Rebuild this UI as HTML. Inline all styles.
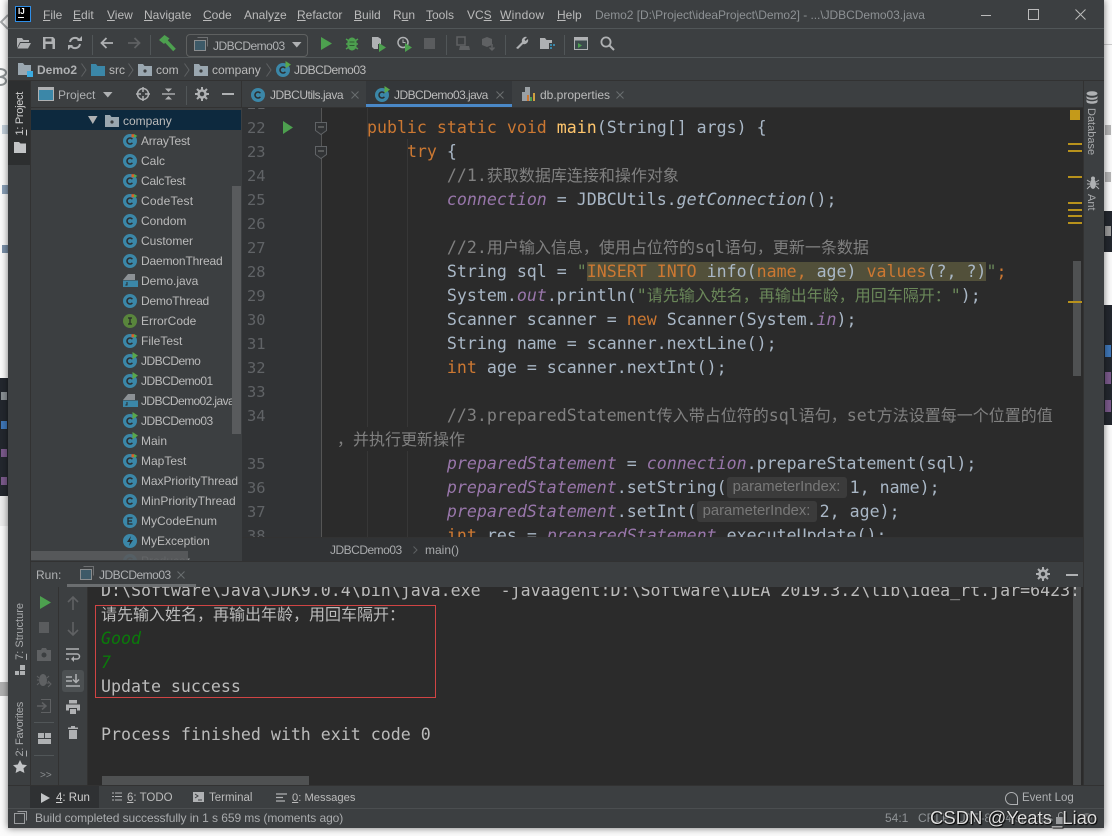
<!DOCTYPE html>
<html><head><meta charset="utf-8"><style>
html,body{margin:0;padding:0;width:1112px;height:836px;overflow:hidden;background:#fbfbfb}
*{box-sizing:border-box}
div,span.a,svg.a{position:absolute}
body{font-family:"Liberation Sans","Noto Sans CJK SC",sans-serif;font-size:12px;color:#bbbbbb}
#w{left:8px;top:0;width:1096px;height:828px;background:#3c3f41;box-shadow:0 0 7px rgba(0,0,0,.55)}
.t{position:absolute;white-space:pre;line-height:16px;height:16px}
.t u{text-decoration:underline}
.q{letter-spacing:-.5px}
.v{position:absolute;white-space:pre;writing-mode:vertical-rl;line-height:14px;font-size:11px}
.r{transform:rotate(180deg)}
.hl{position:absolute;height:1px;background:#515658}
.vl{position:absolute;width:1px;background:#515658}
svg{position:absolute;overflow:visible}
.l{position:absolute;left:327px;white-space:pre;height:24px;line-height:24px;font-family:"DejaVu Sans Mono","Noto Sans CJK SC",monospace;font-size:16.6px;color:#a9b7c6;transform:translateY(1px)}
.n{position:absolute;left:247px;white-space:pre;height:24px;line-height:24px;font-family:"DejaVu Sans Mono",monospace;font-size:15.4px;color:#606366;transform:translateY(1px)}
.k{color:#cc7832}.s{color:#6a8759}.c{color:#808080}.f{color:#9876aa;font-style:italic}.i{font-style:italic}.m{color:#ffc66d}
.z{font-size:16px;font-family:"Noto Sans CJK SC",sans-serif;line-height:0}
.h{background:#52503a}
.p{display:inline-block;position:relative;width:123px;height:0}
.p>span{position:absolute;left:0;top:-16px;width:120px;height:21px;background:#3b3b3b;color:#787878;font:14.8px/21px "Liberation Sans",sans-serif;border-radius:3px;padding-left:6px;overflow:hidden}
.tr{position:absolute;left:141px;height:20px;line-height:20px;white-space:pre;color:#bbbbbb;font-size:12px}
.o{position:absolute;left:101px;white-space:pre;height:24px;line-height:24px;font-family:"DejaVu Sans Mono","Noto Sans CJK SC",monospace;font-size:16.6px;color:#bbbbbb;transform:translateY(1px)}
</style></head><body>
<svg width="0" height="0" style="position:absolute">
<defs>
<g id="c"><circle cx="7" cy="7" r="7" fill="#3b87a8"/><path d="M9.4 5.2A3 3 0 1 0 9.4 8.8" fill="none" stroke="#2b2d2e" stroke-width="1.5"/></g>
<g id="ct"><use href="#c"/><path d="M8.5 0.2h3v3h-3z" fill="#d9622b"/><path d="M11 0l3.4 2-3.4 2z" fill="#59a84b"/></g>
<g id="cr"><use href="#c"/><path d="M9.5 -2l5.5 3.6-5.5 3.6z" fill="#59a84b"/></g>
<g id="j"><path d="M5 1h7v6H0v0L5 1z" fill="#9aa0a4" opacity=".85"/><path d="M0 7.5h15V14H0z" fill="#3b87a8"/><path d="M4 9v3H2.4" stroke="#26292a" fill="none"/></g>
<g id="fd"><path d="M0 1h5l1.500 2H14v10H0z" fill="#9aa7b0"/><circle cx="7" cy="8" r="1.6" fill="#3c3f41"/></g>
<g id="fb"><path d="M0 1h5l1.500 2H14v10H0z" fill="#3b87a8"/></g>
</defs></svg>

<!-- outer page fragments -->
<div style="left:0;top:378px;width:8px;height:118px;background:#23272e"></div>
<div style="left:0;top:496px;width:8px;height:30px;background:#ececec"></div>
<div style="left:1px;top:421px;width:6px;height:8px;background:#3f76b8"></div>
<div style="left:1px;top:449px;width:6px;height:8px;background:#7b5a8c"></div>
<div style="left:1px;top:477px;width:6px;height:8px;background:#7b5a8c"></div>
<div style="left:1px;top:392px;width:6px;height:8px;background:#8a8f94"></div>
<div style="left:2px;top:125px;width:6px;height:9px;background:#c3d0dc"></div>
<div style="left:2px;top:185px;width:6px;height:9px;background:#8aa0b8"></div>
<div style="left:2px;top:245px;width:6px;height:8px;background:#7a90a8"></div>
<svg style="left:0;top:68px" width="8" height="18"><path d="M0 1c8 0 8 7 0 8 8 0 8 8 0 8" fill="none" stroke="#8f9496" stroke-width="2"/></svg>
<svg style="left:0;top:14px" width="8" height="16"><path d="M8 1L1 8l7 7" fill="none" stroke="#a5a8aa" stroke-width="2"/></svg>
<div style="left:0;top:682px;width:8px;height:14px;background:#b0b0b0"></div>
<div style="left:1104px;top:211px;width:8px;height:41px;background:#23272e"></div>
<div style="left:1104px;top:305px;width:8px;height:120px;background:#23272e"></div>
<div style="left:1105px;top:345px;width:6px;height:12px;background:#3f76b8"></div>
<div style="left:1105px;top:372px;width:6px;height:12px;background:#7b5a8c"></div>
<div style="left:1105px;top:400px;width:6px;height:12px;background:#7b5a8c"></div>
<div style="left:1105px;top:125px;width:6px;height:10px;background:#b5b5b5"></div>
<div style="left:1105px;top:172px;width:6px;height:10px;background:#b5b5b5"></div>
<div style="left:1105px;top:226px;width:6px;height:10px;background:#9a9a9a"></div>
<div style="left:1104px;top:44px;width:8px;height:1px;background:#cccccc"></div>

<div id="w"></div>
<div style="left:0;top:0;width:1112px;height:836px">

<!-- rows -->
<div class="hl" style="left:8px;top:28px;width:1096px"></div>
<div class="hl" style="left:8px;top:57px;width:1096px"></div>
<div class="hl" style="left:8px;top:80px;width:1096px;background:#323232"></div>

<!-- title bar -->
<div style="left:15px;top:6px;width:16px;height:16px;background:#000;border:1px solid #2f8fe8"></div>
<div style="left:18px;top:7px;font:bold 8px/9px 'Liberation Sans',sans-serif;color:#fff">IJ</div>
<div style="left:18px;top:17px;width:6px;height:1px;background:#fff"></div>
<div class="t" style="left:43px;top:7px"><u>F</u>ile</div>
<div class="t" style="left:73px;top:7px"><u>E</u>dit</div>
<div class="t" style="left:107px;top:7px"><u>V</u>iew</div>
<div class="t" style="left:144px;top:7px"><u>N</u>avigate</div>
<div class="t" style="left:203px;top:7px"><u>C</u>ode</div>
<div class="t" style="left:244px;top:7px">Analy<u>z</u>e</div>
<div class="t" style="left:297px;top:7px"><u>R</u>efactor</div>
<div class="t" style="left:354px;top:7px"><u>B</u>uild</div>
<div class="t" style="left:393px;top:7px">R<u>u</u>n</div>
<div class="t" style="left:426px;top:7px"><u>T</u>ools</div>
<div class="t" style="left:467px;top:7px">VC<u>S</u></div>
<div class="t" style="left:500px;top:7px;letter-spacing:.3px"><u>W</u>indow</div>
<div class="t" style="left:557px;top:7px"><u>H</u>elp</div>
<div class="t" style="left:595px;top:7px;color:#8d9194;letter-spacing:-.05px">Demo2 [D:\Project\ideaProject\Demo2] - ...\JDBCDemo03.java</div>
<div style="left:981px;top:15px;width:10px;height:1px;background:#bbb"></div>
<div style="left:1028px;top:9px;width:11px;height:11px;border:1px solid #bbb"></div>
<svg style="left:1075px;top:9px" width="11" height="11"><path d="M0.500 0.500l10 10M10.500 0.500l-10 10" stroke="#bbb"/></svg>

<!-- toolbar -->
<svg style="left:16px;top:36px" width="16" height="14"><path d="M1 2h5l1.500 2H13v2H4L1 12z" fill="#afb1b3"/><path d="M4.500 7H15l-3 5.500H1.500z" fill="#afb1b3"/></svg>
<svg style="left:42px;top:36px" width="14" height="14"><path d="M1 1h10l2 2v10H1z" fill="#afb1b3"/><path d="M3.500 2.500h6v3h-6z" fill="#3c3f41"/><path d="M3.500 8h7v5h-7z" fill="#3c3f41"/></svg>
<svg style="left:68px;top:36px" width="14" height="14"><path d="M2 6a5 5 0 0 1 9-2M12 8a5 5 0 0 1-9 2" fill="none" stroke="#afb1b3" stroke-width="2"/><path d="M9 5h5V0zM5 9H0v5z" fill="#afb1b3"/></svg>
<div class="vl" style="left:92px;top:35px;height:20px"></div>
<svg style="left:100px;top:37px" width="14" height="12"><path d="M13 6H2M6.500 1L1.500 6l5 5" fill="none" stroke="#afb1b3" stroke-width="1.800"/></svg>
<svg style="left:127px;top:37px" width="14" height="12"><path d="M1 6h11M7.500 1l5 5-5 5" fill="none" stroke="#5f6163" stroke-width="1.800"/></svg>
<div class="vl" style="left:150px;top:35px;height:20px"></div>
<svg style="left:159px;top:35px" width="17" height="17"><path d="M0 5L5.500 0l5 3.500L5 9z" fill="#4da04f"/><path d="M6.500 5.500L15.500 15" stroke="#4da04f" stroke-width="3.600"/></svg>
<div style="left:186px;top:34px;width:122px;height:23px;border:1px solid #5e6060;border-radius:4px"></div>
<svg style="left:194px;top:37px" width="14" height="14"><path d="M3.500 0.500h10v9" fill="none" stroke="#6e7072"/><rect x="0.500" y="3.500" width="11" height="10" fill="#3d5a68" stroke="#8a8d8f"/></svg>
<div class="t q" style="left:213px;top:38px;color:#afb1b3">JDBCDemo03</div>
<svg style="left:292px;top:42px" width="10" height="6"><path d="M0 0h9.500L4.800 5.500z" fill="#afb1b3"/></svg>
<svg style="left:321px;top:37px" width="11" height="13"><path d="M0 0l11 6.500L0 13z" fill="#4da04f"/></svg>
<svg style="left:345px;top:36px" width="14" height="15"><path d="M1 3l3 2M13 3l-3 2M1 8h3M13 8h-3M1 13l3-2M13 13l-3-2" stroke="#4da04f" stroke-width="1.400"/><ellipse cx="7" cy="8" rx="4.800" ry="6.500" fill="#4da04f"/><path d="M4.500 6h5M4.500 9.500h5" stroke="#2f5a30"/></svg>
<svg style="left:371px;top:36px" width="16" height="16"><path d="M1 1h6l3 2v5H7v5H3L1 11z" fill="#afb1b3"/><path d="M8 7l7 4.500L8 16z" fill="#4da04f"/></svg>
<svg style="left:397px;top:36px" width="16" height="16"><circle cx="6" cy="6.500" r="5" fill="none" stroke="#afb1b3" stroke-width="1.500"/><path d="M6 3.500v3h2.500" stroke="#afb1b3" fill="none"/><path d="M8 7l7 4.500L8 16z" fill="#4da04f"/></svg>
<div style="left:424px;top:38px;width:11px;height:11px;background:#5a5c5e"></div>
<div class="vl" style="left:446px;top:35px;height:20px"></div>
<svg style="left:456px;top:36px" width="14" height="15"><path d="M1 1h8v8H1z" fill="none" stroke="#5f6163" stroke-width="1.500"/><path d="M4 10h9l1 4H3z" fill="#5f6163"/></svg>
<svg style="left:481px;top:36px" width="15" height="15"><path d="M1 3l5-2 5 2v6l-5 2-5-2z" fill="#5f6163"/><path d="M11 8v6M8.500 11.500l2.500 2.500 2.500-2.500" stroke="#5f6163" fill="none" stroke-width="1.500"/></svg>
<div class="vl" style="left:505px;top:35px;height:20px"></div>
<svg style="left:515px;top:36px" width="14" height="14"><path d="M1 12L7 6a4 4 0 0 1 5-5L9.500 3.500l1 1.500L13 3a4 4 0 0 1-5 5l-5 5z" fill="#afb1b3"/></svg>
<svg style="left:540px;top:37px" width="15" height="13"><path d="M0 1h5l1.500 2H12v9H0z" fill="#afb1b3"/><path d="M9 6h6v7H9z" fill="#3c3f41"/><path d="M10 7h2v2h-2zM13 7h2v2h-2zM10 10h2v2h-2z" fill="#3b87a8"/></svg>
<div class="vl" style="left:564px;top:35px;height:20px"></div>
<svg style="left:574px;top:37px" width="14" height="13"><rect x="0.500" y="0.500" width="13" height="12" fill="#3d4a4d" stroke="#afb1b3"/><path d="M1 1h12v2.500H1z" fill="#afb1b3"/><path d="M4 6l4 2.500L4 11z" fill="#4da04f"/></svg>
<svg style="left:600px;top:36px" width="15" height="15"><circle cx="6" cy="6" r="4.600" fill="none" stroke="#afb1b3" stroke-width="1.800"/><path d="M9.500 9.500l4.500 4.500" stroke="#afb1b3" stroke-width="2"/></svg>

<!-- nav bar -->
<svg style="left:18px;top:62px" width="16" height="16"><path d="M0 1h5l1.500 2H13v10H0z" fill="#9aa7b0"/><rect x="9" y="9" width="6" height="6" fill="#3bace2"/></svg>
<div class="t" style="left:37px;top:62px;font-weight:bold;color:#afb1b3">Demo2</div>
<svg style="left:81px;top:63px" width="6" height="14"><path d="M0.500 0.500L5 7l-4.500 6.500" fill="none" stroke="#5e6163"/></svg>
<svg style="left:91px;top:63px" width="14" height="14"><use href="#fb"/></svg>
<div class="t" style="left:109px;top:62px">src</div>
<svg style="left:128px;top:63px" width="6" height="14"><path d="M0.500 0.500L5 7l-4.500 6.500" fill="none" stroke="#5e6163"/></svg>
<svg style="left:138px;top:63px" width="14" height="14"><use href="#fd"/></svg>
<div class="t" style="left:156px;top:62px">com</div>
<svg style="left:184px;top:63px" width="6" height="14"><path d="M0.500 0.500L5 7l-4.500 6.500" fill="none" stroke="#5e6163"/></svg>
<svg style="left:194px;top:63px" width="14" height="14"><use href="#fd"/></svg>
<div class="t" style="left:212px;top:62px">company</div>
<svg style="left:266px;top:63px" width="6" height="14"><path d="M0.500 0.500L5 7l-4.500 6.500" fill="none" stroke="#5e6163"/></svg>
<svg style="left:276px;top:63px" width="14" height="14"><use href="#cr"/></svg>
<div class="t q" style="left:294px;top:62px">JDBCDemo03</div>

<!-- left strip -->
<div style="left:8px;top:81px;width:22px;height:84px;background:#2d2f30"></div>
<div class="vl" style="left:30px;top:81px;height:704px;background:#323232"></div>
<div class="v r" style="left:13px;top:92px;color:#d0d0d0;letter-spacing:-.3px"><u>1</u>: Project</div>
<svg style="left:14px;top:142px" width="12" height="11"><path d="M0 0h5l1.500 1.500H12V11H0z" fill="#c2c4c6"/></svg>
<div class="v r" style="left:13px;top:603px;color:#a9abad"><u>7</u>: Structure</div>
<svg style="left:14px;top:664px" width="12" height="12"><path d="M6 1h5v5H6zM1 7h4v4H1zM6 7h5v4H6z" fill="#afb1b3"/></svg>
<div class="v r" style="left:13px;top:702px;color:#a9abad;letter-spacing:-.25px"><u>2</u>: Favorites</div>
<svg style="left:13px;top:760px" width="14" height="13"><path d="M7 0l2.200 4.500 4.800.6-3.500 3.300.9 4.600L7 10.700 2.600 13l.9-4.600L0 5.100l4.800-.6z" fill="#c2c4c6"/></svg>

<!-- project header -->
<svg style="left:38px;top:87px" width="16" height="14"><rect x="0.500" y="0.500" width="15" height="13" fill="#3b87a8" stroke="#afb1b3"/><path d="M1 1h14v2H1z" fill="#afb1b3"/></svg>
<div class="t" style="left:58px;top:87px;color:#afb1b3">Project</div>
<svg style="left:103px;top:92px" width="10" height="6"><path d="M0 0h9.500L4.800 5.500z" fill="#afb1b3"/></svg>
<svg style="left:136px;top:87px" width="14" height="14"><circle cx="7" cy="7" r="5.500" fill="none" stroke="#afb1b3" stroke-width="1.500"/><path d="M7 0v5M7 9v5M0 7h5M9 7h5" stroke="#afb1b3" stroke-width="1.500"/></svg>
<svg style="left:162px;top:87px" width="13" height="14"><path d="M0 7h13" stroke="#afb1b3" stroke-width="1.400"/><path d="M6.500 5L3 1.500h7zM6.500 9L3 12.500h7z" fill="#afb1b3"/></svg>
<div class="vl" style="left:186px;top:86px;height:19px"></div>
<svg style="left:195px;top:87px" width="14" height="14"><circle cx="7" cy="7" r="3.500" fill="none" stroke="#afb1b3" stroke-width="2.500"/><path d="M7 0v3M7 11v3M0 7h3M11 7h3M2 2l2 2M10 10l2 2M12 2l-2 2M2 12l2-2" stroke="#afb1b3" stroke-width="2"/></svg>
<div style="left:222px;top:93px;width:12px;height:2px;background:#afb1b3"></div>
<div class="hl" style="left:30px;top:107px;width:1053px;background:#323232"></div>

<!-- tabs -->
<div class="vl" style="left:241px;top:81px;height:26px;background:#323232"></div>
<svg style="left:251px;top:88px" width="14" height="14"><use href="#c"/></svg>
<div class="t q" style="left:270px;top:87px">JDBCUtils.java</div>
<svg style="left:351px;top:91px" width="8" height="8"><path d="M0.500 0.500l7 7M7.500 0.500l-7 7" stroke="#6a6d6f"/></svg>
<div style="left:366px;top:81px;width:146px;height:26px;background:#34373a"></div>
<div style="left:366px;top:104px;width:146px;height:3px;background:#4a88c7"></div>
<svg style="left:375px;top:88px" width="14" height="14"><use href="#cr"/></svg>
<div class="t" style="left:394px;top:87px;letter-spacing:-.55px">JDBCDemo03.java</div>
<svg style="left:496px;top:91px" width="8" height="8"><path d="M0.500 0.500l7 7M7.500 0.500l-7 7" stroke="#6a6d6f"/></svg>
<svg style="left:522px;top:87px" width="14" height="15"><path d="M3 0h5v14H0V5h3z" fill="#9aa0a4"/><path d="M5 8h2v6H5z" fill="#cc7832"/><path d="M8 10h2v4H8z" fill="#4da04f"/><path d="M11 6h2v8h-2z" fill="#d0a040"/></svg>
<div class="t" style="left:540px;top:87px">db.properties</div>
<svg style="left:616px;top:91px" width="8" height="8"><path d="M0.500 0.500l7 7M7.500 0.500l-7 7" stroke="#6a6d6f"/></svg>

<!-- project tree -->
<div style="left:31px;top:110px;width:210px;height:20px;background:#0d293e"></div>
<svg style="left:88px;top:116px" width="10" height="8"><path d="M0 0h9.500L4.800 8z" fill="#afb1b3"/></svg>
<svg style="left:105px;top:114px" width="14" height="14"><use href="#fd"/></svg>
<div class="tr" style="left:123px;top:111px">company</div>
<svg style="left:123px;top:134px" width="14" height="14"><use href="#ct"/></svg><div class="tr" style="top:131px;letter-spacing:-.2px">ArrayTest</div>
<svg style="left:123px;top:154px" width="14" height="14"><use href="#c"/></svg><div class="tr" style="top:151px">Calc</div>
<svg style="left:123px;top:174px" width="14" height="14"><use href="#ct"/></svg><div class="tr" style="top:171px;letter-spacing:-.2px">CalcTest</div>
<svg style="left:123px;top:194px" width="14" height="14"><use href="#ct"/></svg><div class="tr" style="top:191px;letter-spacing:.2px">CodeTest</div>
<svg style="left:123px;top:214px" width="14" height="14"><use href="#c"/></svg><div class="tr" style="top:211px">Condom</div>
<svg style="left:123px;top:234px" width="14" height="14"><use href="#c"/></svg><div class="tr" style="top:231px">Customer</div>
<svg style="left:123px;top:254px" width="14" height="14"><use href="#c"/></svg><div class="tr" style="top:251px;letter-spacing:-.15px">DaemonThread</div>
<svg style="left:123px;top:273px" width="15" height="15"><use href="#j"/></svg><div class="tr" style="top:271px">Demo.java</div>
<svg style="left:123px;top:294px" width="14" height="14"><use href="#c"/></svg><div class="tr" style="top:291px;letter-spacing:-.2px">DemoThread</div>
<svg style="left:123px;top:314px" width="14" height="14"><circle cx="7" cy="7" r="7" fill="#59853c"/><path d="M5 4h4M5 10h4M7 4v6" stroke="#26292a" stroke-width="1.300"/></svg><div class="tr" style="top:311px">ErrorCode</div>
<svg style="left:123px;top:334px" width="14" height="14"><use href="#ct"/></svg><div class="tr" style="top:331px">FileTest</div>
<svg style="left:123px;top:354px" width="14" height="14"><use href="#cr"/></svg><div class="tr q" style="top:351px">JDBCDemo</div>
<svg style="left:123px;top:374px" width="14" height="14"><use href="#cr"/></svg><div class="tr q" style="top:371px">JDBCDemo01</div>
<svg style="left:123px;top:393px" width="15" height="15"><use href="#j"/></svg><div class="tr" style="top:391px;letter-spacing:-.6px">JDBCDemo02.java</div>
<svg style="left:123px;top:414px" width="14" height="14"><use href="#cr"/></svg><div class="tr q" style="top:411px">JDBCDemo03</div>
<svg style="left:123px;top:434px" width="14" height="14"><use href="#cr"/></svg><div class="tr" style="top:431px">Main</div>
<svg style="left:123px;top:454px" width="14" height="14"><use href="#ct"/></svg><div class="tr" style="top:451px">MapTest</div>
<svg style="left:123px;top:474px" width="14" height="14"><use href="#c"/></svg><div class="tr" style="top:471px;letter-spacing:-.06px">MaxPriorityThread</div>
<svg style="left:123px;top:494px" width="14" height="14"><use href="#c"/></svg><div class="tr" style="top:491px">MinPriorityThread</div>
<svg style="left:123px;top:514px" width="14" height="14"><circle cx="7" cy="7" r="7" fill="#3b87a8"/><path d="M9.500 4H5v6h4.500M5 7h4" fill="none" stroke="#26292a" stroke-width="1.300"/></svg><div class="tr" style="top:511px">MyCodeEnum</div>
<svg style="left:123px;top:534px" width="14" height="14"><circle cx="7" cy="7" r="7" fill="#3b87a8"/><path d="M8 2L4 8h3l-1 4 4-6H7z" fill="#26292a"/></svg><div class="tr" style="top:531px">MyException</div>
<div style="left:31px;top:551px;width:210px;height:9px;overflow:hidden"><svg style="left:92px;top:3px" width="14" height="14"><use href="#c"/></svg><div class="tr" style="left:110px;top:0">Producer</div></div>
<div style="left:232px;top:186px;width:9px;height:248px;background:#595b5d"></div>
<div style="left:31px;top:551px;width:157px;height:9px;background:rgba(89,91,93,.9)"></div>

<!-- gutter + editor -->
<div style="left:242px;top:108px;width:80px;height:429px;background:#313335"></div>
<div style="left:321px;top:108px;width:762px;height:429px;background:#2b2b2b"></div>
<div class="vl" style="left:321px;top:108px;height:429px;background:#555555"></div>
<div style="left:242px;top:108px;width:841px;height:429px;overflow:hidden">
 <div style="left:-242px;top:-108px;width:1100px;height:640px">
 <div class="vl" style="left:367px;top:108px;height:319px;background:#373737"></div>
 <div class="vl" style="left:407px;top:139px;height:288px;background:#373737"></div>
 <div class="vl" style="left:367px;top:451px;height:90px;background:#373737"></div>
 <div class="vl" style="left:407px;top:451px;height:90px;background:#373737"></div>
 <div class="n" style="top:91px">21</div>
 <div class="n" style="top:115px">22</div>
 <div class="n" style="top:139px">23</div>
 <div class="n" style="top:163px">24</div>
 <div class="n" style="top:187px">25</div>
 <div class="n" style="top:211px">26</div>
 <div class="n" style="top:235px">27</div>
 <div class="n" style="top:259px">28</div>
 <div class="n" style="top:283px">29</div>
 <div class="n" style="top:307px">30</div>
 <div class="n" style="top:331px">31</div>
 <div class="n" style="top:355px">32</div>
 <div class="n" style="top:379px">33</div>
 <div class="n" style="top:403px">34</div>
 <div class="n" style="top:451px">35</div>
 <div class="n" style="top:475px">36</div>
 <div class="n" style="top:499px">37</div>
 <div class="n" style="top:523px">38</div>
 <div class="l" style="top:115px">    <span class="k">public static void</span> <span class="m">main</span>(String[] args) {</div>
 <div class="l" style="top:139px">        <span class="k">try</span> {</div>
 <div class="l c" style="top:163px">            //1.<span class="z">获取数据库连接和操作对象</span></div>
 <div class="l" style="top:187px">            <span class="f">connection</span> = JDBCUtils.<span class="i">getConnection</span>();</div>
 <div class="l c" style="top:235px">            //2.<span class="z">用户输入信息&#65292;使用占位符的</span>sql<span class="z">语句&#65292;更新一条数据</span></div>
 <div class="l" style="top:259px">            String sql = <span class="s">"</span><span class="h"><span class="k">INSERT INTO</span> info(<span class="k">name,</span> age) <span class="k">values</span>(?, ?)</span><span class="s">"</span><span class="k">;</span></div>
 <div class="l" style="top:283px">            System.<span class="f">out</span>.println(<span class="s">"<span class="z">请先输入姓名&#65292;再输出年龄&#65292;用回车隔开&#65306;</span>"</span>);</div>
 <div class="l" style="top:307px">            Scanner scanner = <span class="k">new</span> Scanner(System.<span class="f">in</span>);</div>
 <div class="l" style="top:331px">            String name = scanner.nextLine();</div>
 <div class="l" style="top:355px">            <span class="k">int</span> age = scanner.nextInt();</div>
 <div class="l c" style="top:403px">            //3.preparedStatement<span class="z">传入带占位符的</span>sql<span class="z">语句&#65292;</span>set<span class="z">方法设置每一个位置的值</span></div>
 <div class="l c" style="top:427px;left:337px"><span class="z">&#65292;并执行更新操作</span></div>
 <div class="l" style="top:451px">            <span class="f">preparedStatement</span> = <span class="f">connection</span>.prepareStatement(sql);</div>
 <div class="l" style="top:475px">            <span class="f">preparedStatement</span>.setString(<span class="p"><span>parameterIndex:</span></span>1, name);</div>
 <div class="l" style="top:499px">            <span class="f">preparedStatement</span>.setInt(<span class="p"><span>parameterIndex:</span></span>2, age);</div>
 <div class="l" style="top:523px">            <span class="k">int</span> res = <span class="f">preparedStatement</span>.executeUpdate();</div>
 </div>
</div>
<svg style="left:283px;top:121px" width="10" height="13"><path d="M0 0l10 6.500L0 13z" fill="#4da04f"/></svg>
<svg style="left:315px;top:122px" width="12" height="13"><path d="M0.500 0.500h11v8L6 12.500 0.500 8.500z" fill="#313335" stroke="#606366"/><path d="M3 5h6" stroke="#808080"/></svg>
<svg style="left:315px;top:146px" width="12" height="13"><path d="M0.500 0.500h11v8L6 12.500 0.500 8.500z" fill="#313335" stroke="#606366"/><path d="M3 5h6" stroke="#808080"/></svg>
<div style="left:1070px;top:110px;width:10px;height:10px;background:#c49a1a"></div>
<div style="left:1073px;top:261px;width:8px;height:115px;background:#4f5152"></div>
<div style="left:1068px;top:143px;width:14px;height:2px;background:#b8921c"></div>
<div style="left:1068px;top:150px;width:14px;height:2px;background:#b8921c"></div>
<div style="left:1068px;top:176px;width:14px;height:2px;background:#b8921c"></div>
<div style="left:1068px;top:202px;width:14px;height:2px;background:#b8921c"></div>
<div style="left:1068px;top:209px;width:14px;height:2px;background:#b8921c"></div>
<div style="left:1068px;top:215px;width:14px;height:2px;background:#b8921c"></div>
<div style="left:1068px;top:222px;width:14px;height:2px;background:#b8921c"></div>
<div style="left:1068px;top:301px;width:14px;height:2px;background:#b8921c"></div>

<!-- right strip -->
<div class="vl" style="left:1083px;top:81px;height:704px;background:#323232"></div>
<svg style="left:1086px;top:91px" width="12" height="13"><ellipse cx="6" cy="2.500" rx="5.500" ry="2.300" fill="#afb1b3"/><path d="M0.500 4.500v2c0 3 11 3 11 0v-2c0 3-11 3-11 0zM0.500 8v2.500c0 3 11 3 11 0V8c0 3-11 3-11 0z" fill="#afb1b3"/></svg>
<div class="v" style="left:1084px;top:108px;color:#a9abad">Database</div>
<svg style="left:1087px;top:176px" width="12" height="14"><ellipse cx="6" cy="8" rx="3" ry="5" fill="#afb1b3"/><circle cx="6" cy="2.500" r="2" fill="#afb1b3"/><path d="M0 4l3 2M12 4L9 6M0 8h3M12 8H9M0 13l3-3M12 13l-3-3" stroke="#afb1b3"/></svg>
<div class="v" style="left:1084px;top:194px;color:#a9abad">Ant</div>

<!-- editor breadcrumb -->
<div class="hl" style="left:242px;top:537px;width:841px;background:#323232"></div>
<div style="left:242px;top:538px;width:841px;height:23px;background:#313335"></div>
<div class="t q" style="left:330px;top:542px;color:#a9abad">JDBCDemo03</div>
<svg style="left:413px;top:546px" width="5" height="8"><path d="M0.500 0.500L4 4 .5 7.500" fill="none" stroke="#5e6163"/></svg>
<div class="t" style="left:425px;top:542px;color:#a9abad">main()</div>

<!-- run header -->
<div class="hl" style="left:30px;top:561px;width:1053px;background:#323232"></div>
<div class="t" style="left:36px;top:567px;color:#afb1b3">Run:</div>
<svg style="left:80px;top:566px" width="14" height="14"><path d="M3.500 0.500h10v9" fill="none" stroke="#6e7072"/><rect x="0.500" y="3.500" width="11" height="10" fill="#3d5a68" stroke="#8a8d8f"/></svg>
<div class="t q" style="left:99px;top:567px;color:#afb1b3">JDBCDemo03</div>
<svg style="left:177px;top:571px" width="8" height="8"><path d="M0.500 0.500l7 7M7.500 0.500l-7 7" stroke="#6a6d6f"/></svg>
<div style="left:67px;top:584px;width:129px;height:3px;background:#6b6e70"></div>
<svg style="left:1036px;top:567px" width="14" height="14"><circle cx="7" cy="7" r="3.500" fill="none" stroke="#afb1b3" stroke-width="2.500"/><path d="M7 0v3M7 11v3M0 7h3M11 7h3M2 2l2 2M10 10l2 2M12 2l-2 2M2 12l2-2" stroke="#afb1b3" stroke-width="2"/></svg>
<div style="left:1066px;top:574px;width:12px;height:2px;background:#afb1b3"></div>

<!-- run left toolbars -->
<div class="vl" style="left:58px;top:587px;height:198px;background:#323232"></div>
<div class="vl" style="left:87px;top:587px;height:198px;background:#323232"></div>
<svg style="left:40px;top:596px" width="11" height="13"><path d="M0 0l11 6.500L0 13z" fill="#4da04f"/></svg>
<div style="left:39px;top:622px;width:10px;height:11px;background:#5a5c5e"></div>
<svg style="left:37px;top:648px" width="14" height="13"><path d="M0 2h4l1-2h4l1 2h4v11H0z" fill="#5f6163"/><circle cx="7" cy="7" r="2.500" fill="#3c3f41"/></svg>
<svg style="left:37px;top:673px" width="15" height="15"><ellipse cx="6" cy="7" rx="4" ry="6" fill="#5f6163"/><path d="M0 3l2 2M12 3l-2 2M0 7h2M0 12l2-2" stroke="#5f6163"/><path d="M9 10h4M11 8l3 3-3 3" stroke="#5f6163" fill="none"/></svg>
<svg style="left:37px;top:699px" width="14" height="14"><path d="M4 0.500h9.500v13H4" fill="none" stroke="#5f6163"/><path d="M0 7h8M5 3.500L9 7l-4 3.500" fill="none" stroke="#5f6163" stroke-width="1.500"/></svg>
<div class="hl" style="left:34px;top:722px;width:20px"></div>
<svg style="left:38px;top:733px" width="13" height="12"><path d="M0 0h6v5H0zM7 0h6v5H7zM0 6h13v5H0z" fill="#afb1b3"/></svg>
<div class="hl" style="left:34px;top:755px;width:20px"></div>
<div class="t" style="left:40px;top:768px;font-size:10px;color:#8a8d8f">&gt;&gt;</div>
<svg style="left:67px;top:596px" width="12" height="14"><path d="M6 14V1M1 6l5-5 5 5" fill="none" stroke="#5f6163" stroke-width="1.600"/></svg>
<svg style="left:67px;top:622px" width="12" height="14"><path d="M6 0v13M1 8l5 5 5-5" fill="none" stroke="#5f6163" stroke-width="1.600"/></svg>
<svg style="left:66px;top:648px" width="14" height="14"><path d="M0 1h13M0 6h11a2.500 2.500 0 0 1 0 5H6M0 11h3" fill="none" stroke="#afb1b3" stroke-width="1.500"/><path d="M8 8l-3 3 3 3z" fill="#afb1b3"/></svg>
<div style="left:62px;top:670px;width:22px;height:22px;background:#4c5052;border-radius:3px"></div>
<svg style="left:66px;top:674px" width="14" height="14"><path d="M0 3h6M0 7h6M0 12h14" stroke="#afb1b3" stroke-width="1.500"/><path d="M10 0v8M7 5.500l3 3 3-3" fill="none" stroke="#afb1b3" stroke-width="1.500"/></svg>
<svg style="left:66px;top:700px" width="14" height="14"><path d="M3 0h8v3.500H3zM0 4.500h14v6h-3V8H3v2.500H0zM4 9h6v5H4z" fill="#afb1b3"/></svg>
<svg style="left:68px;top:726px" width="10" height="13"><path d="M3 0h4v1.500h3V3H0V1.500h3zM1 4h8v9H1z" fill="#afb1b3"/></svg>

<!-- console -->
<div style="left:88px;top:587px;width:995px;height:198px;background:#2b2b2b;overflow:hidden">
 <div style="left:-88px;top:-587px;width:1180px;height:800px">
 <div style="left:1073px;top:587px;width:8px;height:198px;background:#4a4c4d"></div>
 <div class="o" style="top:578px">D:\Software\Java\JDK9.0.4\bin\java.exe  -javaagent:D:\Software\IDEA 2019.3.2\lib\idea_rt.jar=6423:</div>
 <div class="o" style="top:602px"><span class="z">请先输入姓名&#65292;再输出年龄&#65292;用回车隔开&#65306;</span></div>
 <div class="o" style="top:626px;color:#0a7a0a;font-style:italic">Good</div>
 <div class="o" style="top:650px;color:#0a7a0a;font-style:italic">7</div>
 <div class="o" style="top:674px">Update success</div>
 <div class="o" style="top:722px">Process finished with exit code 0</div>
 <div style="left:95px;top:605px;width:341px;height:93px;border:1px solid #d04444"></div>
 <div style="left:102px;top:776px;width:207px;height:9px;background:#4f5152"></div>
 </div>
</div>

<!-- bottom tool bar -->
<div class="hl" style="left:8px;top:785px;width:1096px;background:#323232"></div>
<div style="left:30px;top:786px;width:69px;height:23px;background:#2f3133"></div>
<svg style="left:41px;top:793px" width="9" height="10"><path d="M0 0l9 5-9 5z" fill="#c2c4c6"/></svg>
<div class="t" style="left:56px;top:790px;font-size:11.500px;color:#d0d0d0"><u>4</u>: Run</div>
<svg style="left:112px;top:792px" width="10" height="10"><path d="M0 1h2M3 1h7M0 4.500h2M3 4.500h7M0 8h2M3 8h7" stroke="#afb1b3"/></svg>
<div class="t" style="left:127px;top:790px;font-size:11.500px"><u>6</u>: TODO</div>
<svg style="left:193px;top:792px" width="11" height="10"><path d="M0 0h11v10H0z" fill="#afb1b3"/><path d="M2 2l3 2-3 2M5 8h4" stroke="#3c3f41" fill="none"/></svg>
<div class="t" style="left:209px;top:790px;font-size:11.500px">Terminal</div>
<svg style="left:276px;top:793px" width="11" height="9"><path d="M0 1h11M0 4.500h7M0 8h9" stroke="#afb1b3" stroke-width="1.300"/></svg>
<div class="t" style="left:292px;top:790px;font-size:11.200px"><u>0</u>: Messages</div>
<svg style="left:1005px;top:792px" width="13" height="13"><path d="M12.500 12.500H6.500a6 6 0 1 1 6-6z" fill="none" stroke="#afb1b3"/></svg>
<div class="t" style="left:1022px;top:790px;font-size:11.500px;color:#afb1b3">Event Log</div>

<!-- status bar -->
<div class="hl" style="left:8px;top:808px;width:1096px;background:#4b4e50"></div>
<svg style="left:14px;top:811px" width="13" height="13"><path d="M3.500 0.500h9v9" fill="none" stroke="#9a9c9e"/><rect x="0.500" y="2.500" width="10" height="10" fill="none" stroke="#9a9c9e"/></svg>
<div class="t" style="left:35px;top:810px;color:#a9abad;letter-spacing:-.07px">Build completed successfully in 1 s 659 ms (moments ago)</div>
<div class="t" style="left:885px;top:810px;color:#8f9396">54:1</div>
<div class="t" style="left:918px;top:810px;color:#8f9396">CRLF</div>
<div class="t" style="left:957px;top:810px;color:#8f9396">UTF-8</div>
<div class="t" style="left:1005px;top:810px;color:#8f9396">4 spaces</div>
<svg style="left:1056px;top:812px" width="10" height="12"><path d="M2.500 5V3a2.500 2.500 0 0 1 5 0" fill="none" stroke="#9a9c9e"/><path d="M0 5h10v7H0z" fill="#9a9c9e"/></svg>
<svg style="left:1081px;top:812px" width="12" height="12"><circle cx="6" cy="6" r="5" fill="#6d6f71"/></svg>

<!-- watermark -->
<div class="t" style="left:930px;top:807px;height:22px;line-height:22px;font-size:18.500px;color:#dcdcdc;text-shadow:1px 1px 1px #000,-1px 0 1px #222">CSDN @Yeats_Liao</div>
</div>
</body></html>
